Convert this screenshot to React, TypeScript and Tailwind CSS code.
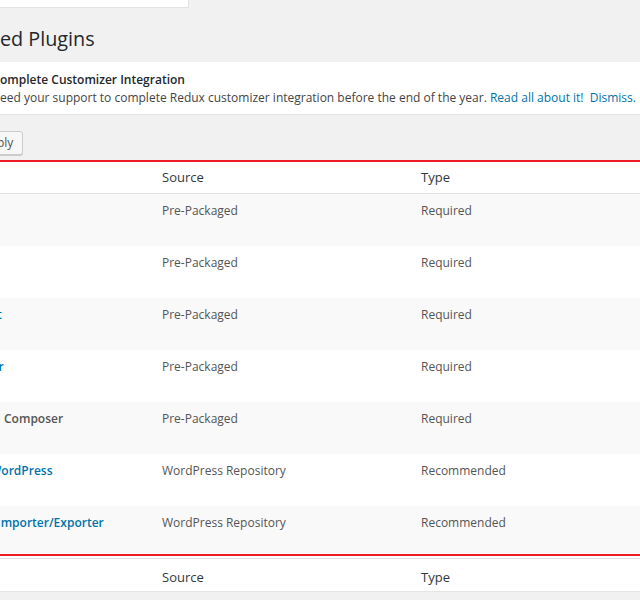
import React from "react";

type Row = {
  name: React.ReactNode;
  source: string;
  type: string;
};

const link = "text-[#0073aa] font-semibold";

const rows: Row[] = [
  { name: null, source: "Pre-Packaged", type: "Required" },
  { name: null, source: "Pre-Packaged", type: "Required" },
  { name: <span className={`${link} ml-[-3px]`}>t</span>, source: "Pre-Packaged", type: "Required" },
  { name: <span className={`${link} ml-[-1.5px]`}>r</span>, source: "Pre-Packaged", type: "Required" },
  {
    name: <span className="font-semibold text-[#555] ml-[4px]">Composer</span>,
    source: "Pre-Packaged",
    type: "Required",
  },
  { name: <span className={`${link} ml-[-10px]`}>WordPress</span>, source: "WordPress Repository", type: "Recommended" },
  { name: <span className={`${link} ml-[-3px]`}>Importer/Exporter</span>, source: "WordPress Repository", type: "Recommended" },
];

function HeadRow({ foot }: { foot?: boolean }) {
  return (
    <div
      className={`grid grid-cols-[153px_259px_1fr] text-[13px] leading-[18px] text-[#32373c] ${
        foot ? "h-[32px] pt-[9px]" : "h-[31px] pt-[6px]"
      }`}
    >
      <div />
      <div className="pl-[9px]">Source</div>
      <div className="pl-[9px]">Type</div>
    </div>
  );
}

export default function App() {
  return (
    <div className="w-[640px] h-[600px] overflow-hidden bg-[#f1f1f1] font-['Open_Sans',sans-serif] text-[#444]">
      <div className="w-[189px] h-[8px] bg-white border-b border-r border-[#e2e2e2]" />
      <h1 className="mt-[18px] h-[26px] text-[19.8px] leading-[26px] font-normal text-[#23282d] whitespace-nowrap">
        ed Plugins
      </h1>
      <div className="mt-[10px] h-[52px] bg-white pt-[9px] text-[12px] leading-[18px] whitespace-nowrap shadow-[0_1px_1px_rgba(0,0,0,0.05)]">
        <div className="font-semibold text-[#23282d]">omplete Customizer Integration</div>
        <div>
          eed your support to complete Redux customizer integration before the end of the year.{" "}
          <span className="text-[#0073aa]">Read all about it!</span>
          {"\u00a0 "}
          <span className="text-[#0073aa]">Dismiss.</span>
        </div>
      </div>
      <div className="mt-[17px] h-[25px] flex">
        <button className="ml-[-28px] h-[24px] pl-[9px] pr-[8.6px] border border-[#cccccc] rounded-[3px] bg-[#f7f7f7] text-[12px] leading-[22px] text-[#555] shadow-[0_1px_0_#cccccc]">
          Apply
        </button>
      </div>
      <div className="mt-[4px] h-[2px] bg-[#ed1c24]" />
      <div className="bg-white">
        <HeadRow />
        <div className="h-[1px] bg-[#e1e1e1]" />
        {rows.map((r, i) => (
          <div
            key={i}
            className={`grid grid-cols-[153px_259px_1fr] pt-[8px] text-[12px] leading-[18px] text-[#555] whitespace-nowrap overflow-hidden ${
              i === rows.length - 1 ? "h-[48px]" : "h-[52px]"
            } ${i % 2 === 0 ? "bg-[#f9f9f9]" : "bg-white"}`}
          >
            <div className="overflow-hidden">{r.name}</div>
            <div className="pl-[9px]">{r.source}</div>
            <div className="pl-[9px]">{r.type}</div>
          </div>
        ))}
        <div className="h-[2px] bg-[#ed1c24]" />
        <div className="h-[2px] bg-white" />
        <div className="h-[1px] bg-[#e1e1e1]" />
        <HeadRow foot />
        <div className="h-[1px] bg-[#e5e5e5]" />
      </div>
    </div>
  );
}
